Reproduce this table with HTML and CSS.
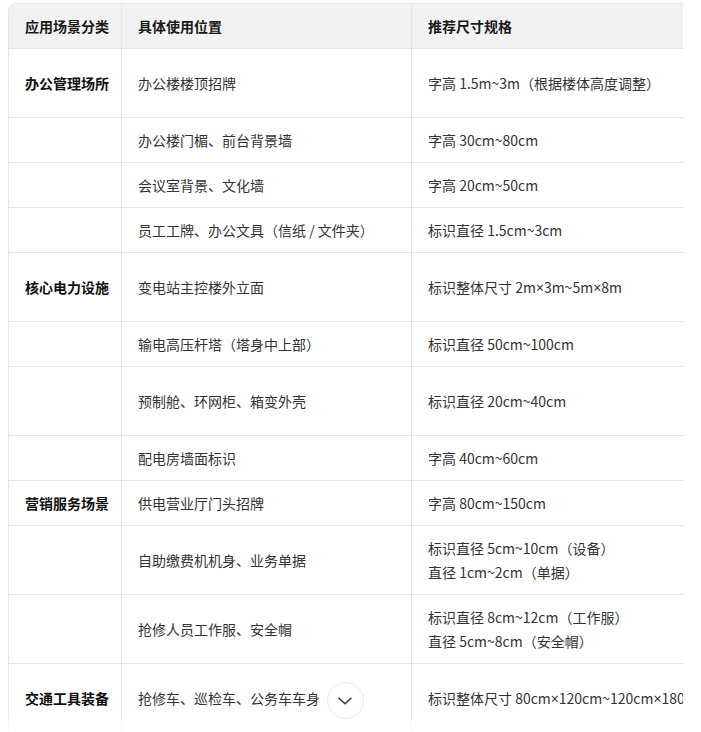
FILE: index.html
```html
<!DOCTYPE html>
<html lang="zh-CN">
<head>
<meta charset="utf-8">
<title>应用场景尺寸规格</title>
<link rel="stylesheet" href="styles.css">
</head>
<body>
<div class="page">
  <div class="table-box">
    <table class="spec-table">
      <thead>
        <tr>
          <th class="col-cat">应用场景分类</th>
          <th class="col-pos">具体使用位置</th>
          <th class="col-size">推荐尺寸规格</th>
        </tr>
      </thead>
      <tbody>
        <tr class="tall">
          <td class="cat">办公管理场所</td>
          <td>办公楼楼顶招牌</td>
          <td>字高 1.5m~3m（根据楼体高度调整）</td>
        </tr>
        <tr>
          <td class="cat"></td>
          <td>办公楼门楣、前台背景墙</td>
          <td>字高 30cm~80cm</td>
        </tr>
        <tr>
          <td class="cat"></td>
          <td>会议室背景、文化墙</td>
          <td>字高 20cm~50cm</td>
        </tr>
        <tr>
          <td class="cat"></td>
          <td>员工工牌、办公文具（信纸 / 文件夹）</td>
          <td>标识直径 1.5cm~3cm</td>
        </tr>
        <tr class="tall">
          <td class="cat">核心电力设施</td>
          <td>变电站主控楼外立面</td>
          <td>标识整体尺寸 2m<span class="x">×</span>3m~5m<span class="x">×</span>8m</td>
        </tr>
        <tr>
          <td class="cat"></td>
          <td>输电高压杆塔（塔身中上部）</td>
          <td>标识直径 50cm~100cm</td>
        </tr>
        <tr class="tall">
          <td class="cat"></td>
          <td>预制舱、环网柜、箱变外壳</td>
          <td>标识直径 20cm~40cm</td>
        </tr>
        <tr>
          <td class="cat"></td>
          <td>配电房墙面标识</td>
          <td>字高 40cm~60cm</td>
        </tr>
        <tr>
          <td class="cat">营销服务场景</td>
          <td>供电营业厅门头招牌</td>
          <td>字高 80cm~150cm</td>
        </tr>
        <tr>
          <td class="cat"></td>
          <td>自助缴费机机身、业务单据</td>
          <td>标识直径 5cm~10cm（设备）<br>直径 1cm~2cm（单据）</td>
        </tr>
        <tr>
          <td class="cat"></td>
          <td>抢修人员工作服、安全帽</td>
          <td>标识直径 8cm~12cm（工作服）<br>直径 5cm~8cm（安全帽）</td>
        </tr>
        <tr class="tall">
          <td class="cat">交通工具装备</td>
          <td>抢修车、巡检车、公务车车身</td>
          <td>标识整体尺寸 80cm<span class="x">×</span>120cm~120cm<span class="x">×</span>180cm</td>
        </tr>
      </tbody>
    </table>
    <div class="fade"></div>
    <button class="expand" type="button" aria-label="展开">
      <svg width="14" height="8" viewBox="0 0 14 8" aria-hidden="true">
        <path d="M1 1.2 L7 6.8 L13 1.2" fill="none" stroke="#333" stroke-width="1.5" stroke-linecap="round" stroke-linejoin="round"/>
      </svg>
    </button>
  </div>
</div>
</body>
</html>
```

FILE: styles.css
```css
* { box-sizing: border-box; }

html, body {
  margin: 0;
  padding: 0;
  background: #ffffff;
}

body {
  font-family: "Noto Sans CJK SC", "Noto Sans", sans-serif;
  font-size: 14px;
  color: #333333;
}

.page {
  padding: 3px 0 0 8px;
}

.table-box {
  position: relative;
  width: 675px;
  height: 729px;
  overflow: hidden;
}

.spec-table {
  table-layout: fixed;
  width: 764px;
  border-collapse: separate;
  border-spacing: 0;
  border-top: 1px solid #e6e6e6;
  border-left: 1px solid #e6e6e6;
  border-radius: 8px 8px 0 0;
  overflow: hidden;
}

.spec-table th,
.spec-table td {
  padding: 10px 16px;
  line-height: 24px;
  text-align: left;
  vertical-align: middle;
  border-right: 1px solid #e6e6e6;
  border-bottom: 1px solid #e6e6e6;
  white-space: nowrap;
}

.spec-table th {
  background: #f2f2f2;
  font-weight: 700;
  color: #1a1a1a;
}

.col-cat { width: 113px; }
.col-pos { width: 290px; }
.col-size { width: 360px; }

.spec-table td.cat {
  font-weight: 700;
  color: #111111;
}

.spec-table tr.tall td {
  height: 69px;
}

.x {
  font-family: "Noto Sans", sans-serif;
}

.fade {
  position: absolute;
  left: 0;
  right: 0;
  bottom: 0;
  height: 22px;
  background: linear-gradient(to bottom, rgba(255,255,255,0), rgba(255,255,255,0.85));
  pointer-events: none;
}

.expand {
  position: absolute;
  left: 50%;
  bottom: 13px;
  width: 37px;
  height: 37px;
  margin-left: -19px;
  padding: 0;
  border: 1px solid #ebebeb;
  border-radius: 50%;
  background: #ffffff;
  display: flex;
  align-items: center;
  justify-content: center;
  cursor: pointer;
}
```
